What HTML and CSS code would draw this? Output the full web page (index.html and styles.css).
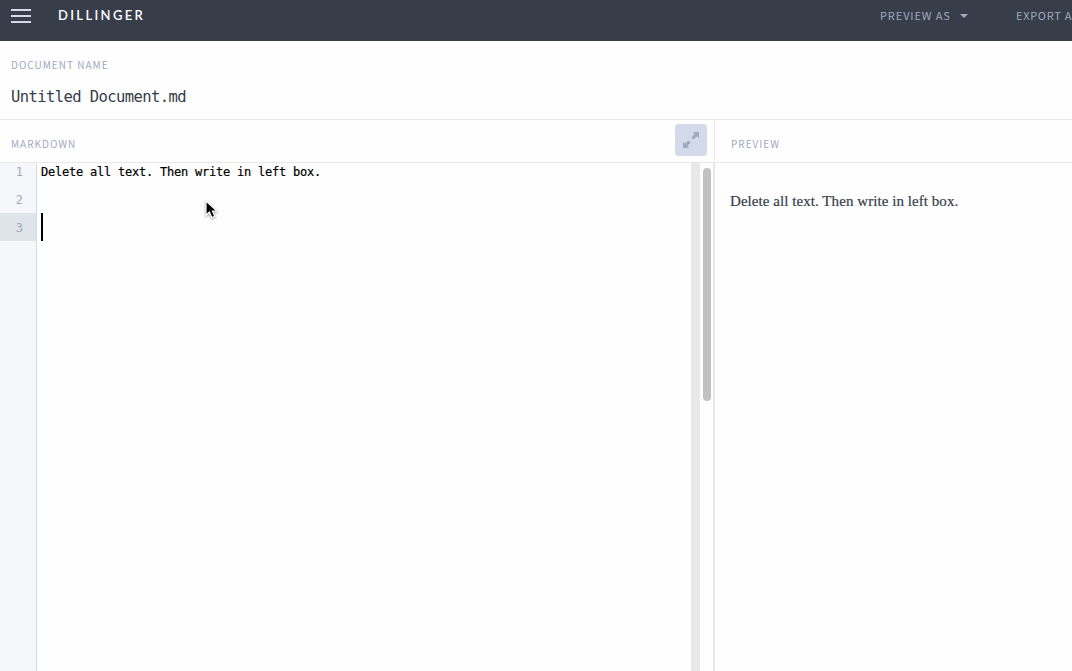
FILE: index.html
```
<!DOCTYPE html>
<html lang="en">
<head>
<meta charset="utf-8">
<title>Dillinger</title>
<link rel="stylesheet" href="styles.css">
</head>
<body>
<header class="navbar">
  <div class="menu"><i></i><i></i><i></i></div>
  <h1 class="brand">DILLINGER</h1>
  <nav class="nav"><span class="nav-preview">PREVIEW AS</span><i class="caret"></i><span class="nav-export">EXPORT A</span></nav>
</header>
<section class="document">
  <div class="label doc-label">DOCUMENT NAME</div>
  <div class="doc-name">Untitled Document.md</div>
</section>
<main class="split">
  <section class="editor-pane">
    <div class="pane-head"><span class="label md-label">MARKDOWN</span>
      <button class="expand" aria-label="Expand"><svg width="16" height="16" viewBox="0 0 16 16"><path d="M10 0H16v6L14 4.400 10.400 7.600 8.400 5.600 11.600 2zM6 16H0V10L2 11.600 5.600 8.400 7.600 10.400 4.400 14z" fill="#a0aabf"/></svg></button>
    </div>
    <div class="editor">
      <div class="gutter"><div>1</div><div>2</div><div class="active">3</div></div>
      <div class="code"><div class="line">Delete all text. Then write in left box.</div><div class="line"></div><div class="line"><i class="cursor"></i></div></div>
      <div class="print-margin"></div>
      <div class="track"><div class="thumb"></div></div>
    </div>
  </section>
  <section class="preview-pane">
    <div class="pane-head"><span class="label pv-label">PREVIEW</span></div>
    <p class="preview">Delete all text. Then write in left box.</p>
  </section>
</main>
<svg class="pointer" width="18" height="24" viewBox="0 0 18 24"><path d="M3 2v14.3l3.4-3.2 2.4 5.4 3-1.3-2.4-5.2h4.5z" fill="#000" stroke="#fff" stroke-width="1.2"/></svg>
</body>
</html>
```
FILE: styles.css
```
* { box-sizing: border-box; }
body { margin: 0; width: 1072px; height: 671px; overflow: hidden; display: flex; flex-direction: column; background: #fefefe; color: #373d49; font-family: "Noto Sans CJK SC", "Noto Sans", sans-serif; }
.navbar { flex: none; height: 41px; display: flex; background: #373d49; overflow: hidden; }
.menu { width: 58px; padding: 9px 0 0 11px; display: flex; flex-direction: column; gap: 4px; }
.menu i { width: 20px; height: 2px; background: #d3daea; }
.brand { margin: 0; font: 600 13px/31px Lato, sans-serif; letter-spacing: 2.35px; color: #fff; }
.nav { margin-left: auto; width: 192px; display: flex; white-space: nowrap; color: #a0aabf; font-size: 11px; line-height: 30px; letter-spacing: .9px; }
.nav-preview { width: 80px; flex: none; }
.caret { flex: none; margin: 14px 48px 0 0; height: 4px; border: 4px solid transparent; border-top-color: #a0aabf; border-bottom: 0; }
.nav-export { letter-spacing: .7px; }
.document { flex: none; height: 79px; padding: 15px 11px 0; border-bottom: 1px solid #e8e8e8; }
.label { color: #a0aabf; font-size: 10px; line-height: 18px; letter-spacing: 1px; white-space: nowrap; }
.doc-name { margin-top: 12px; font: 15.5px/22px "DejaVu Sans Mono", monospace; letter-spacing: -.58px; }
.split { flex: 1; display: flex; min-height: 0; }
.editor-pane { width: 715px; display: flex; flex-direction: column; }
.preview-pane { flex: 1; }
.pane-head { flex: none; height: 43px; padding: 15px 7px 0 11px; display: flex; justify-content: space-between; border-bottom: 1px solid #e8e8e8; }
.editor-pane .pane-head { border-right: 1px solid #e8e8e8; }
.preview-pane .pane-head { padding-left: 16px; }
.expand { width: 32px; height: 32px; margin-top: -11px; padding: 0; display: grid; place-items: center; border: 0; border-radius: 3px; background: #d3daea; }
.editor { flex: 1; display: flex; border-right: 2px solid #e8e8e8; font: 12px/28px "DejaVu Sans Mono", monospace; }
.gutter { width: 37px; background: #f5f7fa; border-right: 1px solid #d3daea; color: #a0aabf; text-align: right; overflow: hidden; }
.gutter div { height: 28px; padding-right: 13px; line-height: 30px; }
.gutter div:first-child, .line:first-child { height: 22px; line-height: 18px; }
.gutter .active { background: #dfe3ea; }
.code { flex: 1; padding-left: 4px; color: #000; letter-spacing: -.224px; white-space: nowrap; -webkit-text-stroke: .2px #000; }
.line { height: 28px; }
.cursor { display: block; width: 2px; height: 28px; background: #000; }
.print-margin { width: 9px; background: #e8e8e8; }
.track { width: 13px; padding: 5px 2px 0 3px; }
.thumb { height: 233px; border-radius: 4px; background: #c1c1c1; }
.preview { margin: 28px 0 0 15px; font: 15px/20px "Liberation Serif", serif; letter-spacing: .06px; -webkit-text-stroke: .2px #373d49; }
.pointer { position: absolute; left: 203px; top: 199px; filter: drop-shadow(0 1px 1px #0006); }
```
